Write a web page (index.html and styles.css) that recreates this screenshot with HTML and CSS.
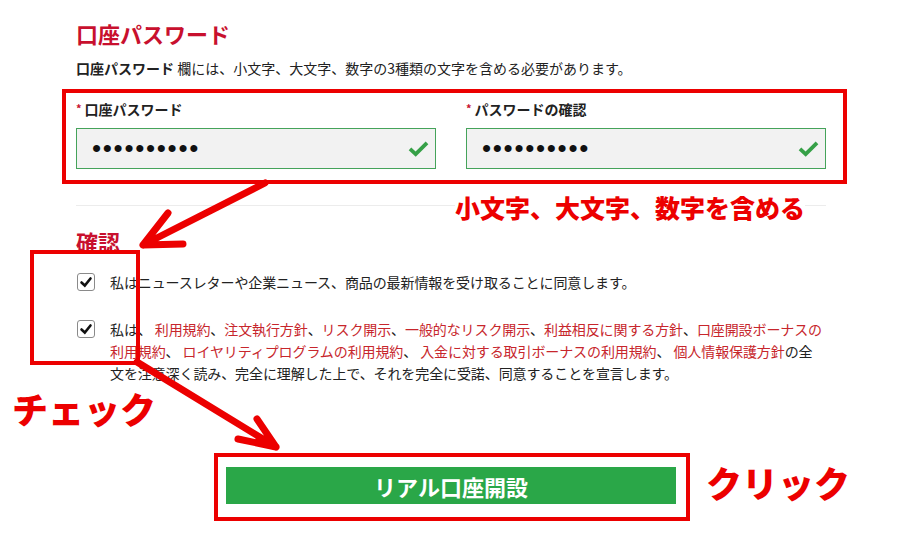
FILE: index.html
```html
<!DOCTYPE html>
<html lang="ja">
<head>
  <meta charset="UTF-8" />
  <meta name="viewport" content="width=device-width, initial-scale=1.0" />
  <title>口座パスワード</title>
  <link rel="stylesheet" href="styles.css">
</head>
<body>

  <div class="page">
    <h2 class="title">口座パスワード</h2>
    <p class="hint"><strong>口座パスワード</strong> 欄には、小文字、大文字、数字の3種類の文字を含める必要があります。</p>

    <div class="fields mark">
      <div class="field">
        <label for="pass"><span class="req">*</span>口座パスワード</label>
        <div class="input-wrap">
          <input type="password" id="pass" value="abcdefghij" />
          <svg class="ok" viewBox="0 0 24 18"><path d="M3 9.5 L9 15 L21 3" /></svg>
        </div>
      </div>
      <div class="field">
        <label for="pass2"><span class="req">*</span>パスワードの確認</label>
        <div class="input-wrap">
          <input type="password" id="pass2" value="abcdefghij" />
          <svg class="ok" viewBox="0 0 24 18"><path d="M3 9.5 L9 15 L21 3" /></svg>
        </div>
      </div>
    </div>

    <hr class="divider">

    <h2 class="title title-confirm">確認</h2>

    <div class="agree">
      <div class="check-row">
        <span class="box"><svg viewBox="0 0 16 16"><path d="M3.5 8.5 L6.8 11.5 L12.5 4.5" /></svg></span>
        <p>私はニュースレターや企業ニュース、商品の最新情報を受け取ることに同意します。</p>
      </div>
      <div class="check-row">
        <span class="box"><svg viewBox="0 0 16 16"><path d="M3.5 8.5 L6.8 11.5 L12.5 4.5" /></svg></span>
        <p>私は、 <a href="#">利用規約</a>、<a href="#">注文執行方針</a>、<a href="#">リスク開示</a>、<a href="#">一般的なリスク開示</a>、<a href="#">利益相反に関する方針</a>、<a href="#">口座開設ボーナスの<br>利用規約</a>、 <a href="#">ロイヤリティプログラムの利用規約</a>、 <a href="#">入金に対する取引ボーナスの利用規約</a>、 <a href="#">個人情報保護方針</a>の全<br>文を注意深く読み、完全に理解した上で、それを完全に受諾、同意することを宣言します。</p>
      </div>
    </div>

    <div class="submit-wrap mark">
      <button type="submit" class="submit">リアル口座開設</button>
    </div>
  </div>

  <!-- annotations -->
  <div class="note note-rules">小文字、大文字、数字を含める</div>
  <div class="note note-check">チェック</div>
  <div class="note note-click">クリック</div>
  <div class="mark-box"></div>

  <svg class="arrows" viewBox="0 0 913 545">
    <path d="M265 183 L143 245 M143 245 L168 213 M143 245 L183 244" />
    <path d="M137 362 L276 447 M276 447 L257 419 M276 447 L238 439" />
  </svg>

</body>
</html>
```

FILE: styles.css
```css
body {
  margin: 0;
  font-family: 'Noto Sans CJK JP', 'Noto Sans', sans-serif;
  background-color: #fff;
  color: #222;
  font-size: 14px;
}

.page {
  width: 750px;
  padding: 19px 0 0 76px;
}

.title {
  margin: 0;
  font-size: 22px;
  line-height: 28px;
  font-weight: bold;
  color: #c8102e;
}

.hint {
  margin: 11px 0 0 0;
  line-height: 20px;
}

.mark {
  border: 4px solid #ec0000;
}

.fields {
  display: flex;
  gap: 30px;
  margin: 11px -21px 0 -14px;
  padding: 6px 17px 11px 10px;
}

.field {
  flex: 1;
}

.field label {
  display: block;
  font-weight: bold;
  line-height: 18px;
  margin-bottom: 10px;
}

.req {
  color: #c8102e;
  font-size: 11px;
  margin-right: 3px;
  vertical-align: 2px;
}

.input-wrap {
  position: relative;
}

.input-wrap input {
  box-sizing: border-box;
  width: 100%;
  height: 41px;
  padding: 0 15px;
  border: 1px solid #45a35a;
  background-color: #f2f2f2;
  font-size: 26px;
  letter-spacing: 1.7px;
  color: #111;
}

.ok {
  position: absolute;
  right: 6px;
  top: 12px;
  width: 23px;
  height: 17px;
  fill: none;
  stroke: #36a047;
  stroke-width: 4;
}

.divider {
  border: none;
  border-top: 1px solid #ececec;
  margin: 21px 0 0 0;
}

.title-confirm {
  margin-top: 21px;
}

.agree {
  margin-top: 16px;
}

.check-row {
  display: flex;
  align-items: flex-start;
  gap: 15px;
  margin-bottom: 25px;
}

.check-row p {
  margin: 0;
  line-height: 22px;
  white-space: nowrap;
  letter-spacing: -0.1px;
}

.check-row a {
  color: #c7262c;
  text-decoration: none;
}

.box {
  flex: 0 0 auto;
  box-sizing: border-box;
  width: 18px;
  height: 18px;
  margin: 2px 0 0 1px;
  border: 1px solid #8a8a8a;
  border-radius: 3px;
  background-color: #fff;
}

.box svg {
  display: block;
  width: 16px;
  height: 16px;
  fill: none;
  stroke: #111;
  stroke-width: 2.6;
  stroke-linecap: round;
}

.submit-wrap {
  width: 476px;
  box-sizing: border-box;
  margin: 69px 0 0 138px;
  padding: 10px 10px 13px 8px;
}

.submit {
  display: block;
  width: 100%;
  height: 37px;
  border: none;
  background-color: #2aa748;
  color: #fff;
  font-family: inherit;
  font-size: 22px;
  font-weight: bold;
  cursor: pointer;
}

.note {
  position: absolute;
  color: #ec0000;
  font-weight: 900;
  white-space: nowrap;
}

.note-rules {
  left: 455px;
  top: 190px;
  font-size: 25px;
  line-height: 34px;
  background-color: #fff;
}

.note-check {
  left: 12px;
  top: 386px;
  font-size: 36px;
  line-height: 44px;
}

.note-click {
  left: 706px;
  top: 460px;
  font-size: 36px;
  line-height: 44px;
}

.mark-box {
  position: absolute;
  left: 30px;
  top: 250px;
  width: 110px;
  height: 115px;
  box-sizing: border-box;
  border: 4px solid #ec0000;
}

.arrows {
  position: absolute;
  left: 0;
  top: 0;
  width: 913px;
  height: 545px;
  pointer-events: none;
  fill: none;
  stroke: #ec0000;
  stroke-width: 7;
  stroke-linecap: round;
}
```
